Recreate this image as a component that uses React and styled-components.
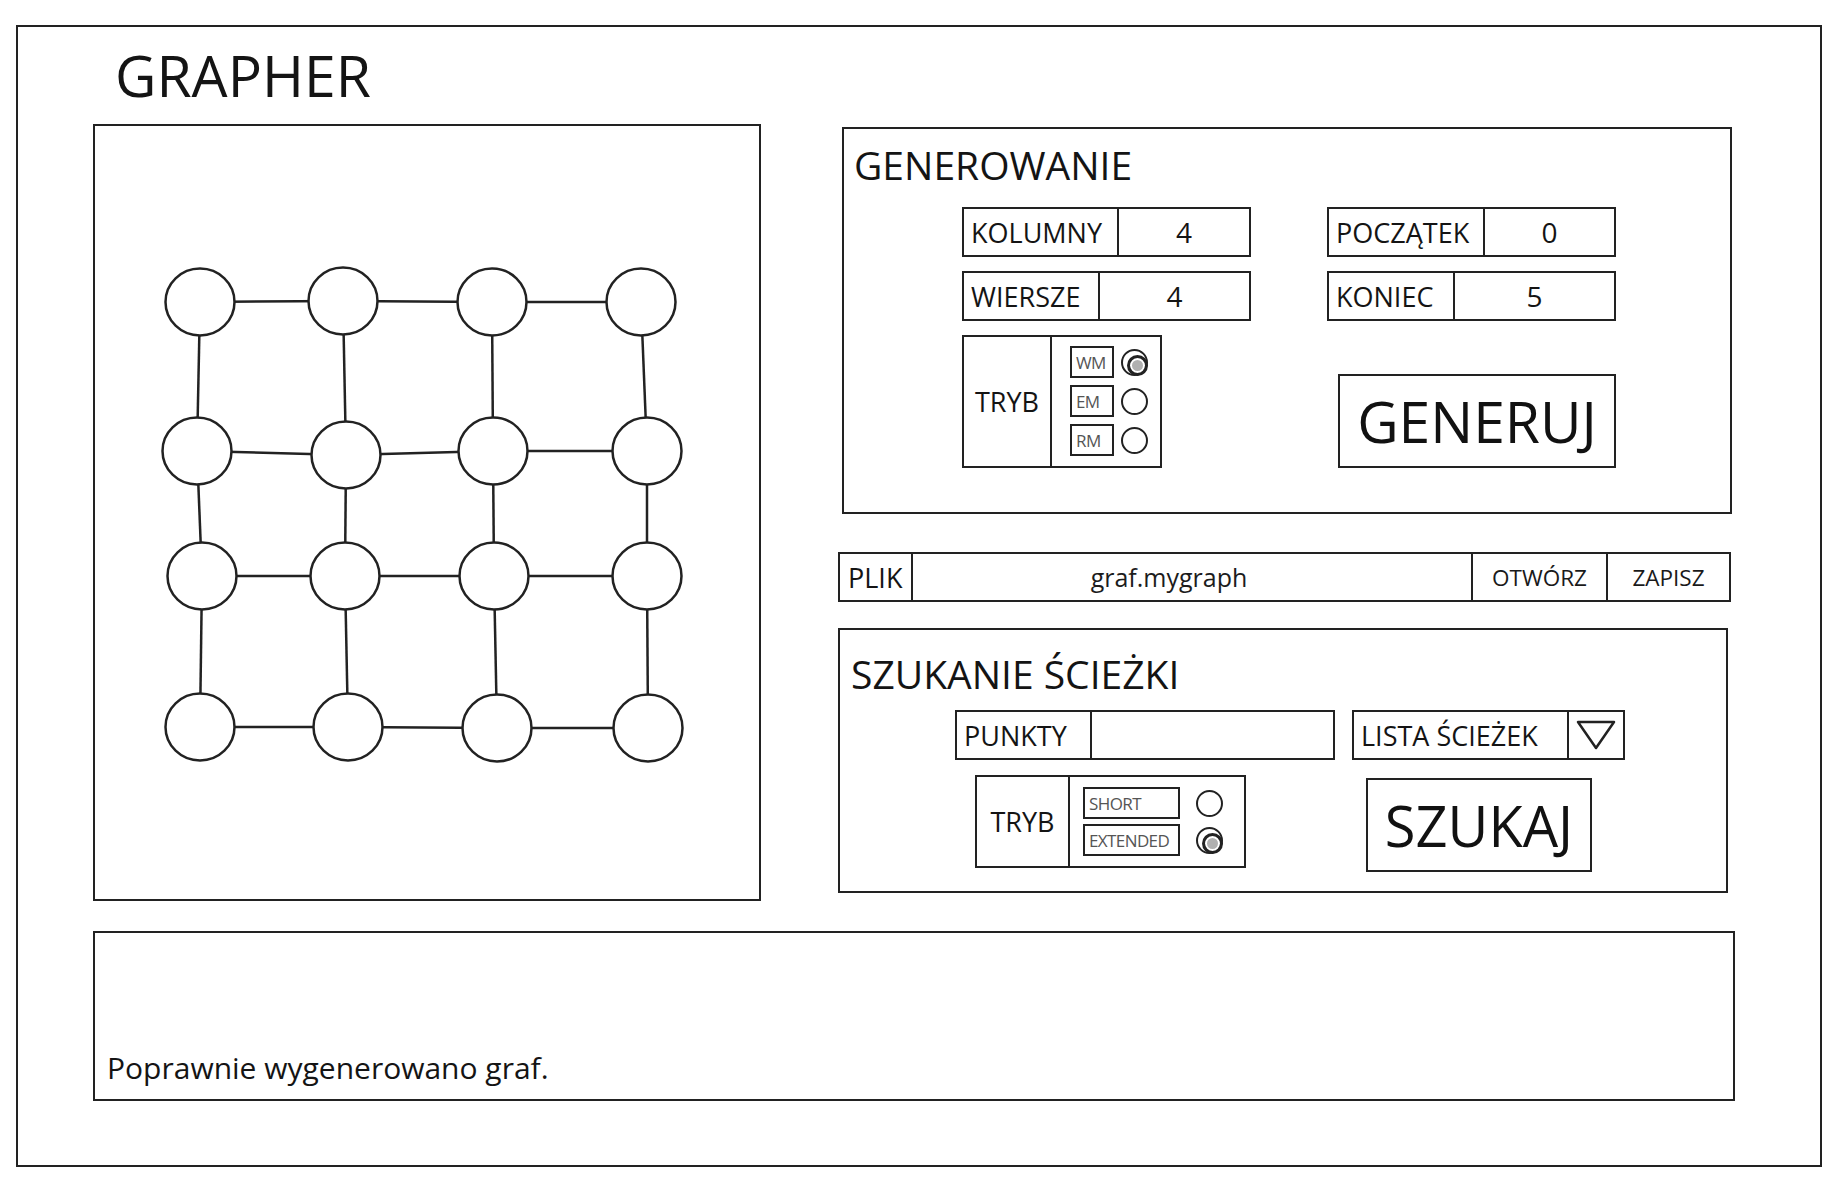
import React from 'react'
import styled, { createGlobalStyle } from 'styled-components'

const GlobalStyle = createGlobalStyle`
  html, body {
    margin: 0;
    padding: 0;
    background: #fff;
  }
  body {
    font-family: "Open Sans", "Noto Sans", sans-serif;
    color: #141414;
  }
  * {
    box-sizing: border-box;
  }
`

const LINE = '#222'

const Frame = styled.div`
  margin: 25px 0 0 16px;
  width: 1806px;
  border: 2px solid ${LINE};
  padding: 20px 0 64px 0;
`

const Title = styled.h1`
  margin: 0;
  padding-left: 97px;
  font-size: 57px;
  line-height: 57px;
  font-weight: 400;
`

const MainRow = styled.div`
  display: flex;
  align-items: flex-start;
  margin-top: 20px;
  padding-left: 75px;
  gap: 77px;
`

const GraphPanel = styled.div`
  width: 668px;
  height: 777px;
  border: 2px solid ${LINE};
  svg {
    display: block;
  }
`

const RightColumn = styled.div`
  display: flex;
  flex-direction: column;
  width: 895px;
`

const Panel = styled.section`
  margin-top: ${p => p.$top}px;
  margin-left: ${p => p.$left || 0}px;
  width: 890px;
  height: ${p => p.$h}px;
  border: 2px solid ${LINE};
  padding: ${p => p.$pt}px 0 0 ${p => p.$pl}px;
`

const PanelTitle = styled.h2`
  margin: 0;
  font-size: 39px;
  line-height: 39px;
  font-weight: 400;
`

const FieldGrid = styled.div`
  display: grid;
  grid-template-columns: 289px 289px;
  grid-template-rows: 50px 50px 133px;
  column-gap: 76px;
  row-gap: 14px;
  margin: 23px 0 0 108px;
`

const Field = styled.div`
  display: flex;
  width: ${p => (p.$w ? `${p.$w}px` : 'auto')};
  height: 50px;
  border: 2px solid ${LINE};
`

const FieldLabel = styled.div`
  display: flex;
  align-items: center;
  width: ${p => p.$w}px;
  padding-left: 7px;
  border-right: 2px solid ${LINE};
  font-size: 27px;
  white-space: nowrap;
`

const FieldValue = styled.div`
  flex: 1;
  display: flex;
  align-items: center;
  justify-content: center;
  font-size: 28px;
`

const ModeBox = styled.div`
  display: flex;
  width: ${p => p.$w}px;
  height: ${p => p.$h}px;
  border: 2px solid ${LINE};
`

const ModeLabel = styled.div`
  display: flex;
  align-items: center;
  justify-content: center;
  width: ${p => p.$w}px;
  border-right: 2px solid ${LINE};
  font-size: 27px;
`

const ModeOptions = styled.div`
  display: flex;
  flex-direction: column;
  gap: ${p => p.$gap}px;
  padding: ${p => p.$pt}px 0 0 ${p => p.$pl}px;
`

const Option = styled.div`
  display: flex;
  align-items: center;
  gap: ${p => p.$gap}px;
`

const OptTag = styled.span`
  display: flex;
  align-items: center;
  width: ${p => p.$w}px;
  height: 32px;
  padding-left: 4px;
  border: 2px solid ${LINE};
  font-size: 17px;
  color: #555;
  letter-spacing: -0.6px;
  white-space: nowrap;
  overflow: hidden;
`

const Radio = styled.span`
  position: relative;
  flex: none;
  width: 27px;
  height: 27px;
  border: 2px solid ${LINE};
  border-radius: 50%;
  &::after {
    content: '';
    display: ${p => (p.$on ? 'block' : 'none')};
    position: absolute;
    left: 4px;
    top: 4px;
    width: 15px;
    height: 15px;
    border: 3.5px solid ${LINE};
    border-radius: 50%;
    background: #b0b0b0;
    box-shadow: inset 0 0 0 2px #fff;
  }
`

const BigButton = styled.button`
  display: flex;
  align-items: center;
  justify-content: center;
  width: ${p => p.$w}px;
  height: 94px;
  margin-top: ${p => p.$mt || 0}px;
  padding: 0;
  border: 2px solid ${LINE};
  background: #fff;
  color: #111;
  font-family: inherit;
  font-size: ${p => p.$fs}px;
  justify-self: end;
  align-self: end;
`

const FileBar = styled.div`
  display: flex;
  margin-top: 38px;
  width: 893px;
  height: 50px;
  border: 2px solid ${LINE};
`

const FileLabel = styled.div`
  display: flex;
  align-items: center;
  width: 73px;
  padding-left: 8px;
  border-right: 2px solid ${LINE};
  font-size: 27px;
`

const FileName = styled.div`
  flex: 1;
  display: flex;
  align-items: center;
  justify-content: center;
  padding-right: 46px;
  font-size: 25px;
  color: #1c1c1c;
`

const BarButton = styled.button`
  display: flex;
  align-items: center;
  justify-content: center;
  flex: none;
  width: ${p => p.$w}px;
  padding: 0;
  border: none;
  border-left: ${p => (p.$boxed ? `2px solid ${LINE}` : 'none')};
  border-right: ${p => (p.$boxed ? `2px solid ${LINE}` : 'none')};
  background: #fff;
  color: #1a1a1a;
  font-family: inherit;
  font-size: 22.5px;
`

const SearchRow = styled.div`
  display: flex;
  align-items: flex-start;
  gap: ${p => p.$gap}px;
  margin: ${p => p.$mt}px 0 0 ${p => p.$ml}px;
`

const DropArrow = styled.div`
  display: flex;
  align-items: center;
  justify-content: center;
  flex: 1;
`

const Console = styled.div`
  display: flex;
  flex-direction: column;
  justify-content: flex-end;
  margin: 30px 0 0 75px;
  width: 1642px;
  height: 170px;
  border: 2px solid ${LINE};
  padding: 0 0 16px 12px;
  font-size: 30px;
  line-height: 30px;
`

// node centres, drawn by hand in the mockup so they are not a perfect grid
const nodes = [
  [[200, 302], [343, 301], [492, 302], [641, 302]],
  [[197, 451], [346, 455], [493, 451], [647, 451]],
  [[202, 576], [345, 576], [494, 576], [647, 576]],
  [[200, 727], [348, 727], [497, 728], [648, 728]],
]

function Graph() {
  const edges = []
  nodes.forEach((row, r) =>
    row.forEach(([x, y], c) => {
      if (c < row.length - 1) edges.push([x, y, row[c + 1][0], row[c + 1][1]])
      if (r < nodes.length - 1) edges.push([x, y, nodes[r + 1][c][0], nodes[r + 1][c][1]])
    })
  )
  return (
    <svg width="664" height="773" viewBox="95 126 664 773">
      {edges.map(([x1, y1, x2, y2], i) => (
        <line key={i} x1={x1} y1={y1} x2={x2} y2={y2} stroke={LINE} strokeWidth="2.5" />
      ))}
      {nodes.flat().map(([x, y], i) => (
        <ellipse key={i} cx={x} cy={y} rx="34.5" ry="33.5" fill="#fff" stroke={LINE} strokeWidth="2.5" />
      ))}
    </svg>
  )
}

function LabeledField({ label, labelWidth, value, width }) {
  return (
    <Field $w={width}>
      <FieldLabel $w={labelWidth}>{label}</FieldLabel>
      <FieldValue>{value}</FieldValue>
    </Field>
  )
}

function Mode({ w, h, labelW, tagW, pt, pl, gap, radioGap, options }) {
  return (
    <ModeBox $w={w} $h={h}>
      <ModeLabel $w={labelW}>TRYB</ModeLabel>
      <ModeOptions $pt={pt} $pl={pl} $gap={gap}>
        {options.map(o => (
          <Option key={o.name} $gap={radioGap}>
            <OptTag $w={tagW}>{o.name}</OptTag>
            <Radio $on={o.on} />
          </Option>
        ))}
      </ModeOptions>
    </ModeBox>
  )
}

export default function App() {
  return (
    <>
      <GlobalStyle />
      <Frame>
        <Title>GRAPHER</Title>
        <MainRow>
          <GraphPanel>
            <Graph />
          </GraphPanel>
          <RightColumn>
            <Panel $top={3} $left={4} $h={387} $pt={16} $pl={10}>
              <PanelTitle>GENEROWANIE</PanelTitle>
              <FieldGrid>
                <LabeledField label="KOLUMNY" labelWidth={155} value="4" />
                <LabeledField label="POCZĄTEK" labelWidth={156} value="0" />
                <LabeledField label="WIERSZE" labelWidth={136} value="4" />
                <LabeledField label="KONIEC" labelWidth={126} value="5" />
                <Mode
                  w={200}
                  h={133}
                  labelW={88}
                  tagW={44}
                  pt={9}
                  pl={18}
                  gap={7}
                  radioGap={7}
                  options={[
                    { name: 'WM', on: true },
                    { name: 'EM', on: false },
                    { name: 'RM', on: false },
                  ]}
                />
                <BigButton $w={278} $fs={57}>GENERUJ</BigButton>
              </FieldGrid>
            </Panel>

            <FileBar>
              <FileLabel>PLIK</FileLabel>
              <FileName>graf.mygraph</FileName>
              <BarButton $w={137} $boxed>OTWÓRZ</BarButton>
              <BarButton $w={121}>ZAPISZ</BarButton>
            </FileBar>

            <Panel $top={26} $h={265} $pt={24} $pl={11}>
              <PanelTitle>SZUKANIE ŚCIEŻKI</PanelTitle>
              <SearchRow $mt={17} $ml={104} $gap={17}>
                <LabeledField label="PUNKTY" labelWidth={135} width={380} />
                <Field $w={273}>
                  <FieldLabel $w={215}>LISTA ŚCIEŻEK</FieldLabel>
                  <DropArrow>
                    <svg width="40" height="30" viewBox="0 0 40 30">
                      <polygon points="2,2 38,2 20,28" fill="none" stroke={LINE} strokeWidth="2.5" strokeLinejoin="round" />
                    </svg>
                  </DropArrow>
                </Field>
              </SearchRow>
              <SearchRow $mt={15} $ml={124} $gap={120}>
                <Mode
                  w={271}
                  h={93}
                  labelW={93}
                  tagW={97}
                  pt={10}
                  pl={13}
                  gap={5}
                  radioGap={16}
                  options={[
                    { name: 'SHORT', on: false },
                    { name: 'EXTENDED', on: true },
                  ]}
                />
                <BigButton $w={226} $fs={56} $mt={3}>SZUKAJ</BigButton>
              </SearchRow>
            </Panel>
          </RightColumn>
        </MainRow>
        <Console>Poprawnie wygenerowano graf.</Console>
      </Frame>
    </>
  )
}
